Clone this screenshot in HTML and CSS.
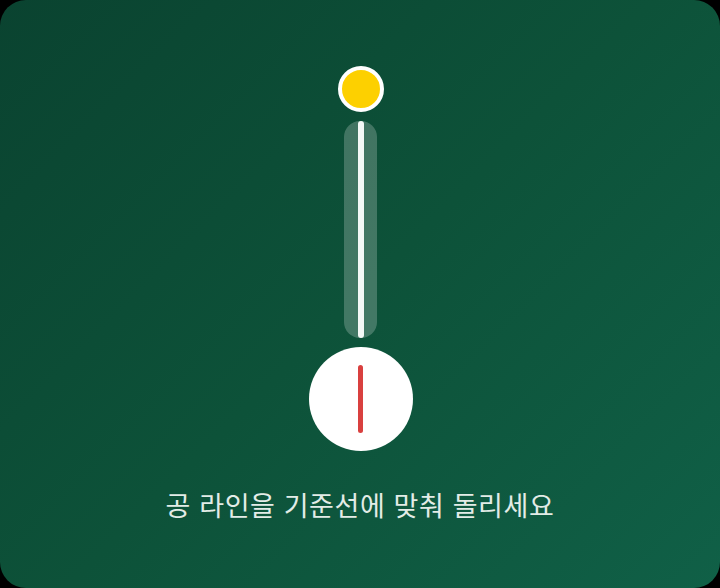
FILE: index.html
```html
<!DOCTYPE html>
<html lang="ko">
<head>
    <meta charset="UTF-8">
    <meta name="viewport" content="width=device-width, initial-scale=1.0">
    <title>공 라인 맞추기</title>
    <link rel="stylesheet" href="styles.css">
</head>
<body>
    <div class="card">
        <div class="aim">
            <div class="ball"></div>
            <div class="track">
                <div class="track-line"></div>
            </div>
            <div class="dial">
                <div class="dial-line"></div>
            </div>
        </div>
        <p class="hint">공 라인을 기준선에 맞춰 돌리세요</p>
    </div>
</body>
</html>
```

FILE: styles.css
```css
/* Page */
html, body {
    margin: 0;
    height: 100%;
    background: #000;
}

.card {
    box-sizing: border-box;
    width: 720px;
    height: 588px;
    border-radius: 26px;
    background: linear-gradient(135deg, #0a4330 0%, #0d5239 50%, #106047 100%);
    display: flex;
    flex-direction: column;
    align-items: center;
    padding-top: 66px;
    font-family: "Noto Sans CJK KR", "Noto Sans", sans-serif;
}

.aim {
    display: flex;
    flex-direction: column;
    align-items: center;
    gap: 9px;
}

/* Yellow ball at the top */
.ball {
    box-sizing: border-box;
    width: 46px;
    height: 46px;
    border-radius: 50%;
    background: #fdd000;
    border: 4px solid #fff;
    margin-left: 1px;
}

/* Guide track */
.track {
    width: 33px;
    height: 217px;
    border-radius: 16px;
    background: rgba(255, 255, 255, 0.22);
    display: flex;
    justify-content: center;
    margin-left: 1px;
}

.track-line {
    width: 6px;
    height: 100%;
    border-radius: 3px;
    background: #f4f8f6;
}

/* White dial with red line */
.dial {
    width: 104px;
    height: 104px;
    border-radius: 50%;
    background: #fff;
    display: flex;
    justify-content: center;
    align-items: center;
    margin-left: 1px;
}

.dial-line {
    width: 5px;
    height: 68px;
    border-radius: 3px;
    background: #d9403f;
}

.hint {
    margin: 34px 0 0;
    color: #e3ece7;
    font-size: 27px;
    line-height: 40px;
    letter-spacing: 0.6px;
}
```
